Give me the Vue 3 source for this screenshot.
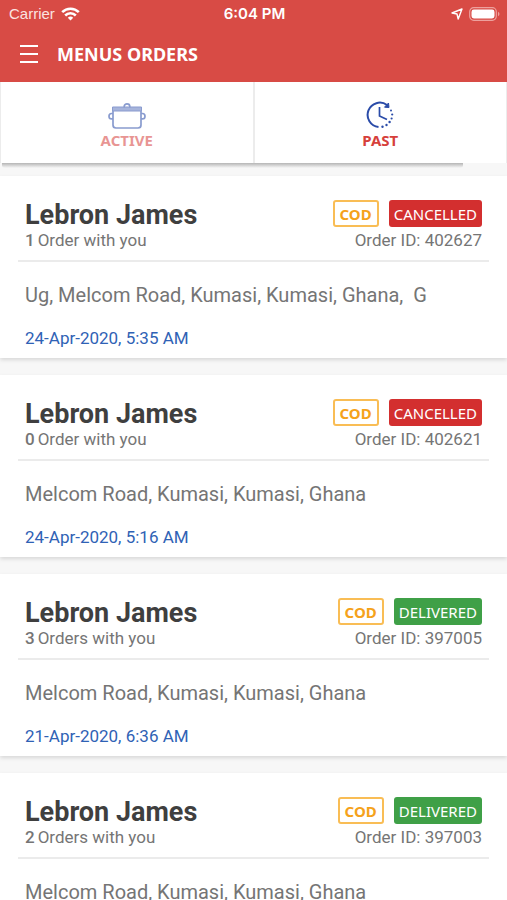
<script setup>
import { ref } from 'vue'

const tab = ref('past')

const orders = [
  { id: '402627', name: 'Lebron James', count: 1, label: 'Order with you', status: 'CANCELLED', address: 'Ug, Melcom Road, Kumasi, Kumasi, Ghana,\u00a0 G', date: '24-Apr-2020, 5:35 AM' },
  { id: '402621', name: 'Lebron James', count: 0, label: 'Order with you', status: 'CANCELLED', address: 'Melcom Road, Kumasi, Kumasi, Ghana', date: '24-Apr-2020, 5:16 AM' },
  { id: '397005', name: 'Lebron James', count: 3, label: 'Orders with you', status: 'DELIVERED', address: 'Melcom Road, Kumasi, Kumasi, Ghana', date: '21-Apr-2020, 6:36 AM' },
  { id: '397003', name: 'Lebron James', count: 2, label: 'Orders with you', status: 'DELIVERED', address: 'Melcom Road, Kumasi, Kumasi, Ghana', date: '' }
]
</script>

<template>
  <div class="screen">
    <header class="top">
      <div class="status">
        <div class="carrier">
          <span>Carrier</span>
          <svg width="19" height="14" viewBox="0 0 19 14" fill="none" stroke="#fff" stroke-width="2.6">
            <path d="M1.2 5.2a11.8 11.8 0 0 1 16.6 0" />
            <path d="M4.2 8.5a7.5 7.5 0 0 1 10.6 0" />
            <path d="M9.5 13.5 6.8 10.8a3.9 3.9 0 0 1 5.4 0z" fill="#fff" stroke="none" />
          </svg>
        </div>
        <span class="clock">6:04 PM</span>
        <div class="power">
          <svg width="12" height="12" viewBox="0 0 12 12" fill="none" stroke="#fff" stroke-width="1.4" stroke-linejoin="round">
            <path d="M11 1 7.2 11 6 6 1 5z" />
          </svg>
          <svg width="31" height="14" viewBox="0 0 31 14">
            <rect x="0.7" y="0.7" width="26.6" height="12.6" rx="4" fill="none" stroke="#eda19d" stroke-width="1.2" />
            <rect x="2.5" y="2.5" width="23" height="9" rx="2.4" fill="#fff" />
            <path d="M29 4.8c2 .8 2 3.6 0 4.4z" fill="#eda19d" />
          </svg>
        </div>
      </div>
      <div class="bar">
        <button class="menu" type="button" aria-label="Menu">
          <svg width="18" height="18" viewBox="0 0 18 18" stroke="#fff" stroke-width="2">
            <path d="M0 1h18M0 9h18M0 17h18" />
          </svg>
        </button>
        <h1>MENUS ORDERS</h1>
      </div>
    </header>

    <nav class="tabs">
      <button type="button" :class="{ dim: tab !== 'active' }" @click="tab = 'active'">
        <svg width="38" height="26" viewBox="0 0 38 26" fill="none" stroke="#2a4ba8" stroke-width="1.7">
          <path d="M16.200 4.500V3.500a2.800 2.600 0 0 1 5.600 0v1" />
          <path d="M4.500 4h29v4h-29z" fill="#2a4ba8" fill-opacity=".75" stroke-width="1" />
          <path d="M5 8v14a3 3 0 0 0 3 3h22a3 3 0 0 0 3-3V8" />
          <path d="M5 10.500H3.500a2.500 2.700 0 0 0 0 5.400H5M33 10.500h1.500a2.500 2.700 0 0 1 0 5.400H33" />
        </svg>
        <span>ACTIVE</span>
      </button>
      <button type="button" :class="{ dim: tab !== 'past' }" @click="tab = 'past'">
        <svg width="28" height="28" viewBox="0 0 28 28" fill="none" stroke="#2a4ba8" stroke-width="2">
          <path d="M12.500 26A12.200 12.200 0 1 1 21 4" />
          <path d="m22.500 2 .5 4.500-4.500-.3z" fill="#2a4ba8" stroke-width="1" />
          <path d="M13.500 6v9l7.500 3.500" stroke-width="1.700" />
          <g fill="#2a4ba8" stroke="none">
            <circle cx="25" cy="9.500" r="1" />
            <circle cx="26.200" cy="13.500" r="1.100" />
            <circle cx="25.600" cy="17.500" r="1.100" />
            <circle cx="23.600" cy="21" r="1.200" />
            <circle cx="20.500" cy="24" r="1.200" />
            <circle cx="16.500" cy="25.800" r="1.200" />
          </g>
        </svg>
        <span>PAST</span>
      </button>
    </nav>

    <main class="list">
      <article v-for="o in orders" :key="o.id" class="card">
        <div class="head">
          <div class="row">
            <h2>{{ o.name }}</h2>
            <div class="badges">
              <span class="badge cod">COD</span>
              <span class="badge" :class="o.status.toLowerCase()">{{ o.status }}</span>
            </div>
          </div>
          <div class="row meta">
            <span class="count"><b>{{ o.count }}</b>{{ o.label }}</span>
            <span>Order ID: {{ o.id }}</span>
          </div>
        </div>
        <p class="address">{{ o.address }}</p>
        <time class="date">{{ o.date }}</time>
      </article>
    </main>
  </div>
</template>

<style>
body {
  margin: 0;
}
</style>

<style scoped>
.screen {
  display: flex;
  flex-direction: column;
  height: 100vh;
  overflow: hidden;
  background: #f7f7f7;
  font-family: Roboto, sans-serif;
  color: #757575;
}
.top {
  flex: none;
  background: #d84b45;
  color: #fff;
}
.status {
  display: grid;
  grid-template-columns: 1fr auto 1fr;
  align-items: center;
  height: 28px;
  padding: 0 7px 0 9px;
  font: 15px/28px "Liberation Sans", sans-serif;
}
.carrier,
.power {
  display: flex;
  align-items: center;
  gap: 6px;
}
.carrier {
  color: #fbe3e1;
}
.power {
  justify-content: flex-end;
}
.clock {
  font-family: Inter, sans-serif;
  font-weight: 600;
}
.bar {
  box-sizing: border-box;
  display: flex;
  align-items: center;
  gap: 19px;
  height: 54px;
  padding: 0 20px 3px;
}
.menu {
  display: flex;
  padding: 0;
  border: 0;
  background: none;
}
h1 {
  margin: 0;
  font: 700 18px/24px "Noto Sans", sans-serif;
}
.tabs {
  position: relative;
  flex: none;
  box-sizing: border-box;
  display: grid;
  grid-template-columns: 1fr 1fr;
  gap: 2px;
  height: 81px;
  padding: 0 1px;
  background: #ececec;
}
.tabs::after {
  content: "";
  position: absolute;
  top: 100%;
  left: 2px;
  width: 91%;
  height: 5px;
  background: linear-gradient(#b5b5b5, #f7f7f7);
  border-radius: 0 0 3px 3px;
}
.tabs button {
  display: flex;
  flex-direction: column;
  align-items: center;
  justify-content: flex-end;
  padding: 0 0 12px;
  border: 0;
  background: #fff;
  color: #d6403b;
  font: 700 15px/22px "Noto Sans", sans-serif;
}
.dim svg,
.dim span {
  opacity: 0.55;
}
.list {
  flex: 1;
  min-height: 0;
  display: flex;
  flex-direction: column;
  gap: 17px;
  padding-top: 13px;
  overflow-y: auto;
  scrollbar-width: none;
}
.card {
  flex: none;
  box-sizing: border-box;
  height: 182px;
  padding: 24px 18px 0;
  background: #fff;
  box-shadow: 0 2px 4px #00000020;
}
.head {
  padding: 0 7px 10px;
  border-bottom: 2px solid #ebebeb;
}
.row {
  display: flex;
  justify-content: space-between;
  align-items: flex-start;
}
h2 {
  margin: 0;
  color: #3f3f3f;
  font: 700 27px/30px Roboto, sans-serif;
}
.badges {
  display: flex;
  gap: 10px;
}
.badge {
  box-sizing: border-box;
  height: 27px;
  padding: 0 5px;
  border-radius: 3px;
  color: #fff;
  font: 15px/28px "Noto Sans", sans-serif;
}
.cod {
  border: 2px solid #f9bd55;
  color: #f5a21b;
  font-weight: 700;
  line-height: 24px;
}
.cancelled {
  background: #d32f2f;
}
.delivered {
  background: #3fa047;
}
.meta {
  font-size: 17px;
  line-height: 20px;
}
.count {
  display: flex;
  gap: 3px;
}
b {
  font-weight: 500;
}
.address {
  margin: 20px 7px 0;
  font-size: 20px;
  line-height: 26px;
}
.date {
  display: block;
  margin: 18px 7px 0;
  color: #2f62b5;
  font-size: 17px;
  line-height: 24px;
}
</style>
